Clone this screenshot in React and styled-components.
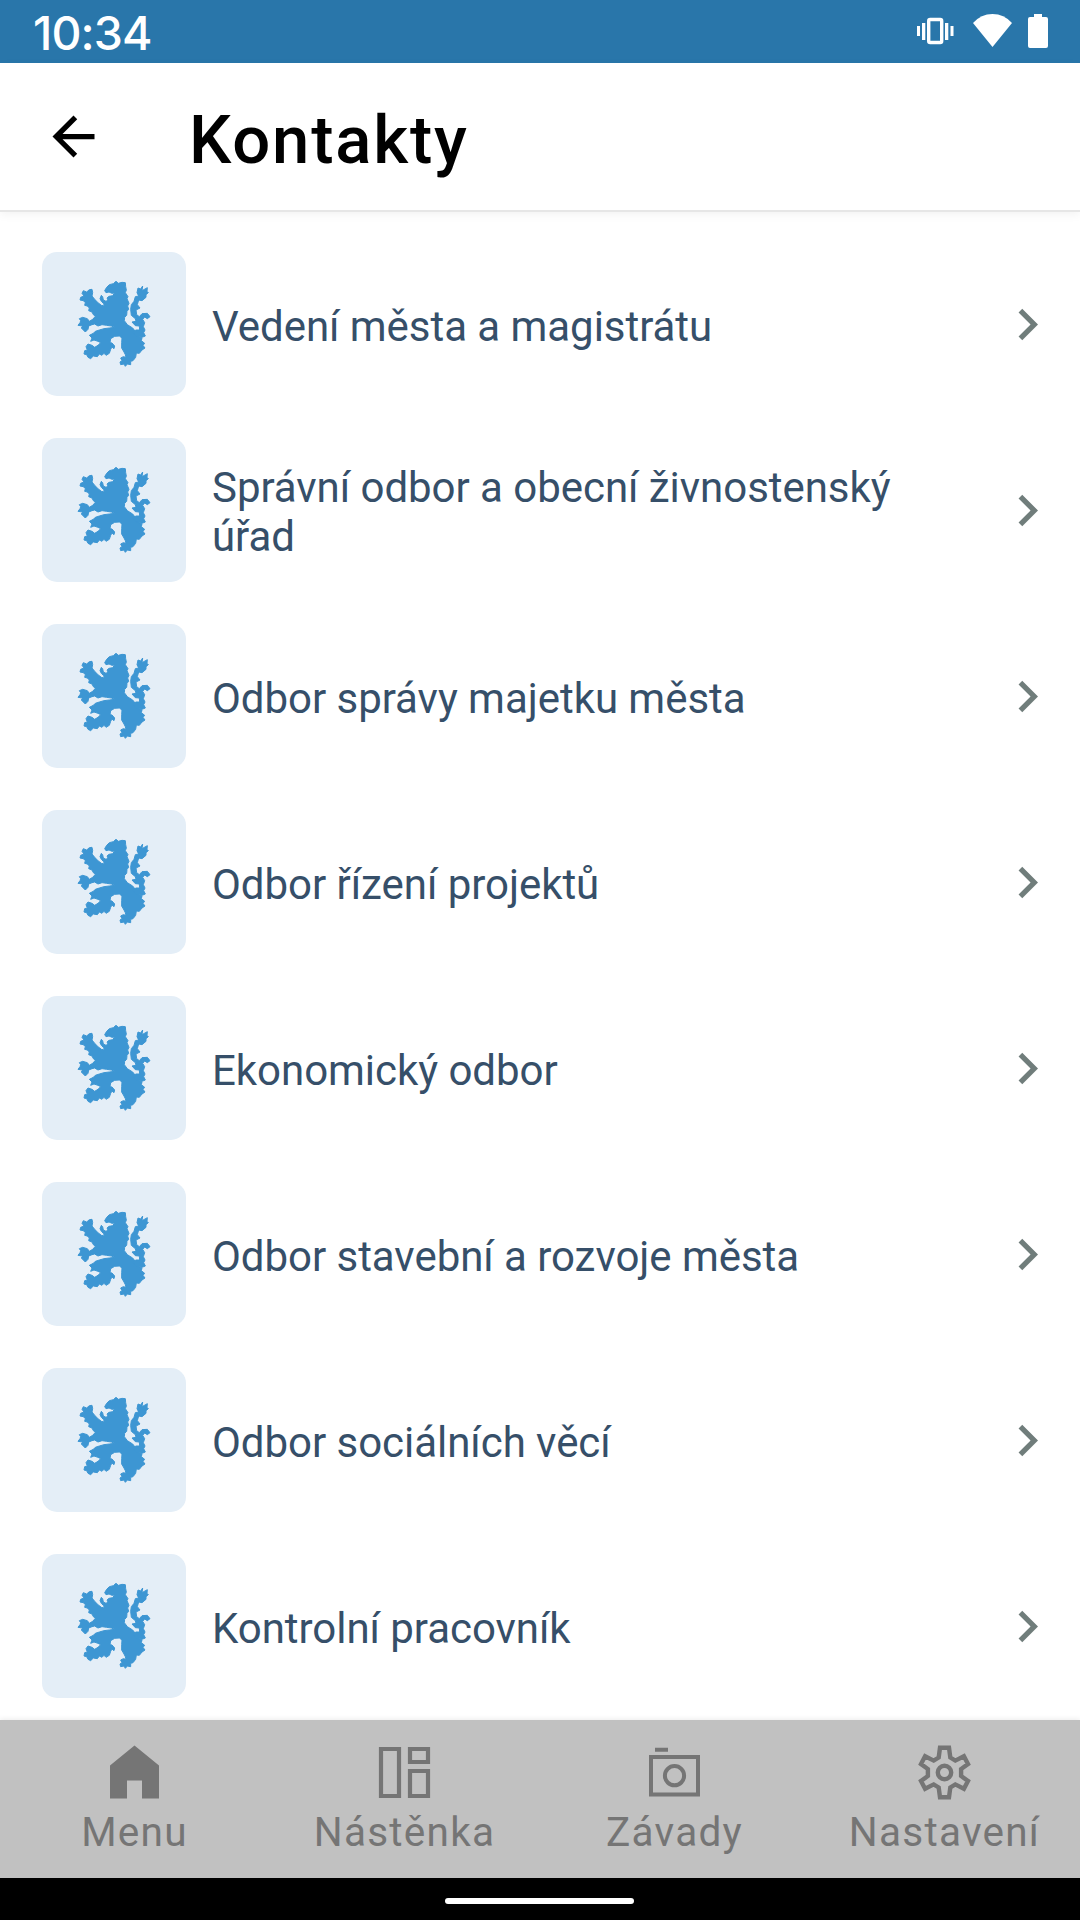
import React from "react";
import styled, { createGlobalStyle } from "styled-components";

const GlobalStyle = createGlobalStyle`
    * {
        box-sizing: border-box;
    }

    body {
        margin: 0;
        background: #fff;
        font-family: Roboto, "Noto Sans", sans-serif;
    }
`;

const Screen = styled.div`
    width: 1080px;
    height: 1920px;
    display: flex;
    flex-direction: column;
    overflow: hidden;
    background: #fff;
`;

const StatusBar = styled.div`
    flex: none;
    height: 63px;
    padding: 0 32px 0 33px;
    display: flex;
    align-items: center;
    justify-content: space-between;
    background: #2976aa;
    color: #fff;
`;

const Clock = styled.span`
    font-family: Inter, sans-serif;
    font-weight: 550;
    font-size: 46.5px;
    line-height: 63px;
    letter-spacing: -0.9px;
    padding-top: 3px;
`;

const StatusIcons = styled.div`
    display: flex;
    align-items: center;

    svg {
        display: block;
    }
`;

const Header = styled.header`
    flex: none;
    height: 147px;
    display: flex;
    align-items: center;
    padding-left: 42px;
    background: #fff;
    box-shadow: 0 2px 0 #e6e6e6, 0 4px 10px rgba(0, 0, 0, 0.06);
`;

const Title = styled.h1`
    margin: 6px 0 0 84px;
    font-size: 67px;
    line-height: 80px;
    font-weight: 500;
    letter-spacing: 1.8px;
    color: #000;
`;

const List = styled.ul`
    flex: 1;
    min-height: 0;
    margin: 0;
    padding: 42px 42px 0;
    display: flex;
    flex-direction: column;
    gap: 42px;
    list-style: none;
`;

const Row = styled.li`
    flex: none;
    height: 144px;
    display: flex;
    align-items: center;
`;

const Tile = styled.div`
    flex: none;
    width: 144px;
    height: 144px;
    border-radius: 15px;
    background: #e4eef7;
    color: #3d96d3;
    overflow: hidden;

    svg {
        display: block;
    }
`;

const Label = styled.span`
    width: 740px;
    margin: 4px auto 0 26px;
    font-size: 42px;
    line-height: 49px;
    letter-spacing: -0.04px;
    color: #364f69;
`;

const Chevron = styled.svg`
    flex: none;
    width: 63px;
    height: 63px;
    margin-right: -21px;
    fill: #707d7b;
`;

const TabBar = styled.nav`
    flex: none;
    height: 158px;
    display: grid;
    grid-template-columns: repeat(4, 1fr);
    background: #c1c1c1;
    box-shadow: 0 -1px 5px rgba(0, 0, 0, 0.08);
`;

const Tab = styled.div`
    display: flex;
    flex-direction: column;
    align-items: center;
    padding: 21px 1px 0 0;
    color: #757575;

    svg {
        display: block;
    }
`;

const TabLabel = styled.span`
    margin-top: 4px;
    font-size: 40.5px;
    line-height: 48px;
    letter-spacing: 1.25px;
    white-space: nowrap;
`;

const GestureBar = styled.div`
    flex: none;
    height: 42px;
    display: flex;
    justify-content: center;
    padding: 20px 2px 0 0;
    background: #000;
`;

const Handle = styled.div`
    width: 189px;
    height: 6px;
    border-radius: 3px;
    background: #fff;
`;

const Lion = () => (
    <svg
        width="144"
        height="144"
        viewBox="18 18 432 432"
        fill="currentColor"
        stroke="currentColor"
        strokeWidth="3"
        strokeLinejoin="round"
    >
        <path d="M240 106 247 112 258 109 268 110 269 122 271 132 268 140 276 152 273 158 279 172 275 180 278 190 273 196 272 208 266 214 265 224 274 236 290 246 298 256 300 268 318 276 316 284 326 292 321 298 327 306 318 312 310 322 301 321 299 334 291 344 284 346 284 356 274 354 268 361 264 354 254 356 252 348 258 344 254 336 262 332 270 334 268 326 264 318 257 306 257 290 258 276 250 270 236 271 224 278 222 290 228 291 236 300 234 308 228 303 224 310 220 322 210 328 204 322 198 328 190 324 184 332 172 330 164 338 156 334 152 326 144 324 146 314 154 312 150 302 156 294 168 298 176 304 186 298 194 290 186 286 174 282 164 286 168 276 160 268 172 262 178 256 190 252 204 248 220 246 236 244 226 240 212 238 198 236 186 240 176 234 168 236 158 240 156 250 148 258 142 252 136 246 140 240 126 238 132 230 134 224 130 218 140 214 154 218 160 226 170 220 178 211 172 206 168 198 158 194 160 186 154 180 146 178 148 170 142 164 132 162 134 154 144 150 138 142 142 134 152 138 160 131 168 130 170 140 168 150 176 160 186 170 196 178 206 180 202 172 196 166 192 158 196 148 200 152 202 162 210 166 216 162 213 156 219 151 230 149 236 141 228 142 219 138 210 140 206 134 212 124 220 116 232 113Z" />
        <path d="M320 120 318 134 334 125 333 136 337 140 330 146 330 154 318 164 308 162 304 176 312 186 300 192 302 206 310 212 318 203 334 202 342 212 334 218 326 213 320 220 326 230 322 242 327 252 323 260 328 270 318 274 300 270 290 258 300 252 311 252 310 240 298 239 288 228 300 226 298 218 286 208 284 190 286 176 294 166 298 152 308 150 303 140 306 126 314 129Z" />
    </svg>
);

const MenuIcon = () => (
    <svg width="63" height="63" viewBox="0 0 63 63" fill="currentColor">
        <path d="M31.5 4.5 56 24.5V57.5H39V39.5H24V57.5H7V24.5Z" />
    </svg>
);

const BoardIcon = () => (
    <svg width="63" height="63" viewBox="0 0 63 63" fill="none" stroke="currentColor" strokeWidth="4.2">
        <path d="M8 8H26V55H8ZM37 8H55V21H37ZM37 30H55V55H37Z" />
    </svg>
);

const CameraIcon = () => (
    <svg width="63" height="63" viewBox="0 0 63 63" fill="none" stroke="currentColor" strokeWidth="4">
        <path d="M8 16H55V53.5H8ZM12 8.8H25" />
        <circle cx="31.5" cy="34.7" r="9.6" />
    </svg>
);

const GearIcon = () => (
    <svg width="63" height="63" viewBox="0 0 63 63" fill="none" stroke="currentColor" strokeWidth="4.4">
        <path d="M27 6.7H36L37.3 16.5 42.3 19.6 50.9 15.2 55 23 48.1 28V35L55 40 50.9 47.8 42.3 43.4 37.3 46.5 36 56.3H27L25.7 46.5 20.7 43.4 12.1 47.8 8 40 14.9 35V28L8 23 12.1 15.2 20.7 19.6 25.7 16.5Z" />
        <circle cx="31.5" cy="31.5" r="6.7" />
    </svg>
);

const contacts = [
    "Vedení města a magistrátu",
    "Správní odbor a obecní živnostenský úřad",
    "Odbor správy majetku města",
    "Odbor řízení projektů",
    "Ekonomický odbor",
    "Odbor stavební a rozvoje města",
    "Odbor sociálních věcí",
    "Kontrolní pracovník",
];

const tabs = [
    { label: "Menu", Icon: MenuIcon },
    { label: "Nástěnka", Icon: BoardIcon },
    { label: "Závady", Icon: CameraIcon },
    { label: "Nastavení", Icon: GearIcon },
];

const App = () => {
    return (
        <Screen>
            <GlobalStyle />
            <StatusBar>
                <Clock>10:34</Clock>
                <StatusIcons>
                    {/* vibrate, wifi, battery */}
                    <svg width="132" height="63" viewBox="916 0 132 63" fill="#fff">
                        <path d="M917 26h3v10h-3zM922 23h3.300v17h-3.300zM945 23h3.300v17h-3.300zM950.500 26h3v10h-3z" />
                        <rect x="928.700" y="19.500" width="13" height="23" rx="1.500" fill="none" stroke="#fff" strokeWidth="3.400" />
                        <path d="M992.500 47 973 23Q981 14 992.500 14T1012 23Z" />
                        <path d="M1034 14h8v3h4q2 0 2 2v27q0 2-2 2h-16q-2 0-2-2V19q0-2 2-2h4z" />
                    </svg>
                </StatusIcons>
            </StatusBar>
            <Header>
                <svg width="63" height="63" viewBox="0 0 24 24" fill="#000">
                    <path d="M20 11H7.830l5.590-5.590L12 4l-8 8 8 8 1.410-1.410L7.830 13H20v-2z" />
                </svg>
                <Title>Kontakty</Title>
            </Header>
            <List>
                {contacts.map((name) => (
                    <Row key={name}>
                        <Tile>
                            <Lion />
                        </Tile>
                        <Label>{name}</Label>
                        <Chevron viewBox="0 0 24 24">
                            <path d="M10 6 8.590 7.410 13.170 12l-4.580 4.590L10 18l6-6z" />
                        </Chevron>
                    </Row>
                ))}
            </List>
            <TabBar>
                {tabs.map(({ label, Icon }) => (
                    <Tab key={label}>
                        <Icon />
                        <TabLabel>{label}</TabLabel>
                    </Tab>
                ))}
            </TabBar>
            <GestureBar>
                <Handle />
            </GestureBar>
        </Screen>
    );
};

export default App;
